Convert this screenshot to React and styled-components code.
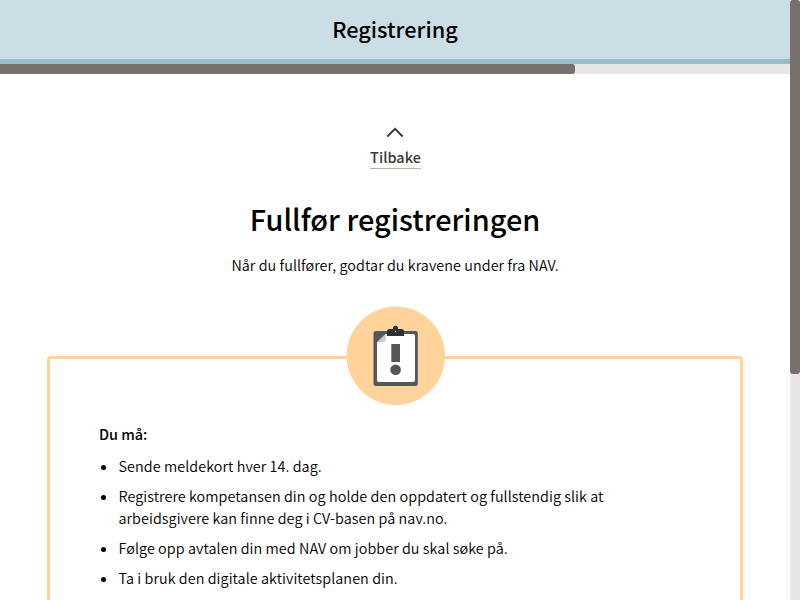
import React from 'react';
import styled, { createGlobalStyle } from 'styled-components';

const GlobalStyle = createGlobalStyle`
  * { box-sizing: border-box; }
  html, body { margin: 0; height: 100%; overflow: hidden; background: #fff; }
  body { font-family: "Noto Sans CJK SC", "Noto Sans", sans-serif; color: #000; font-size: 14.4px; font-weight: 350; }
`;

const Window = styled.div`
  display: flex;
  width: 800px;
  height: 600px;
  overflow: hidden;
`;

const Page = styled.div`
  flex: 0 0 790px;
  display: flex;
  flex-direction: column;
  align-items: stretch;
  overflow: hidden;
`;

const Scrollbar = styled.div`
  flex: 0 0 10px;
  background: #e7e5e5;
`;

const Thumb = styled.div`
  height: 374px;
  border-radius: 3px;
  background: #78706a;
`;

const Header = styled.header`
  flex: 0 0 64px;
  display: flex;
  justify-content: center;
  background: #ccdee5;
  border-bottom: 5px solid #9bbbcb;
`;

const HeaderTitle = styled.div`
  font-size: 21.7px;
  font-weight: 500;
  line-height: 30px;
  padding-top: 14px;
  white-space: nowrap;
`;

const ProgressTrack = styled.div`
  flex: 0 0 10px;
  background: #e7e5e5;
`;

const ProgressBar = styled.div`
  width: 575px;
  height: 10px;
  border-radius: 0 3px 3px 0;
  background: #78706a;
`;

const Main = styled.main`
  flex: none;
  display: flex;
  flex-direction: column;
  align-items: center;
  padding-top: 53px;
`;

const BackLink = styled.a`
  display: flex;
  flex-direction: column;
  align-items: center;
  color: #3e3832;
`;

const BackLabel = styled.span`
  height: 23px;
  margin: 8px 0 0 1px;
  line-height: 22px;
  font-size: 14.5px;
  font-weight: 500;
  border-bottom: 1px solid #b7b1a9;
`;

const Title = styled.h1`
  margin: 29px 0 0;
  font-size: 28.9px;
  font-weight: 500;
  line-height: 40px;
  white-space: nowrap;
`;

const Intro = styled.p`
  margin: 16px 0 0;
  line-height: 22px;
  letter-spacing: 0.063px;
  white-space: nowrap;
`;

const Panel = styled.section`
  width: 696px;
  height: 420px;
  margin-top: 80px;
  border: 3px solid #ffd399;
  border-radius: 4px;
  display: flex;
  flex-direction: column;
  padding: 0 49px;
`;

const Badge = styled.svg`
  flex: none;
  align-self: center;
  width: 100px;
  height: 100px;
  margin-top: -53px;
  transform: translateX(1px);
`;

const ListHeading = styled.p`
  margin: 17px 0 0;
  font-weight: 500;
  line-height: 22px;
`;

const List = styled.ul`
  margin: 10px 0 0;
  padding: 0;
  list-style: none;
  display: flex;
  flex-direction: column;
  gap: 8px;
`;

const Item = styled.li`
  display: flex;
  line-height: 22px;
  letter-spacing: 0.063px;
`;

const Bullet = styled.span`
  flex: none;
  width: 5.5px;
  height: 5.5px;
  margin: 9.5px 12.5px 0 1.5px;
  border-radius: 50%;
  background: #000;
`;

const Line = styled.span`
  display: block;
  width: max-content;
  white-space: nowrap;
`;

const requirements = [
  ['Sende meldekort hver 14. dag.'],
  ['Registrere kompetansen din og holde den oppdatert og fullstendig slik at', 'arbeidsgivere kan finne deg i CV-basen på nav.no.'],
  ['Følge opp avtalen din med NAV om jobber du skal søke på.'],
  ['Ta i bruk den digitale aktivitetsplanen din.'],
];

function ClipboardBadge() {
  return (
    <Badge viewBox="346 306 100 100">
      <circle cx="395.8" cy="355.7" r="49.2" fill="#ffd399" />
      <rect x="373.5" y="331" width="44.3" height="55" rx="2.5" fill="#52585c" />
      <path d="M385.7 334H413a2 2 0 0 1 2 2V380a2 2 0 0 1-2 2H379a2 2 0 0 1-2-2V342.5z" fill="#fff" />
      <path d="M385.7 334V340a2 2 0 0 1-2 2H377z" fill="#c9c9c9" />
      <path d="M387 336V331.5a2.5 2.5 0 0 1 2.5-2.5H393a2.6 2.6 0 1 1 5 0H401.5a2.5 2.5 0 0 1 2.5 2.5V336z" fill="#2c3136" />
      <circle cx="395.5" cy="331.5" r="0.7" fill="#ffd399" />
      <rect x="391.3" y="344" width="8.7" height="18" fill="#52585c" />
      <circle cx="395.6" cy="369.7" r="5.3" fill="#52585c" />
    </Badge>
  );
}

export default function App() {
  return (
    <Window>
      <GlobalStyle />
      <Page>
        <Header><HeaderTitle>Registrering</HeaderTitle></Header>
        <ProgressTrack><ProgressBar /></ProgressTrack>
        <Main>
          <BackLink>
            <svg width="18" height="11" viewBox="0 0 18 11" fill="none" stroke="#3e3832" strokeWidth="2">
              <path d="M1.3 9.5 9 1.9l7.7 7.6" />
            </svg>
            <BackLabel>Tilbake</BackLabel>
          </BackLink>
          <Title>Fullfør registreringen</Title>
          <Intro>Når du fullfører, godtar du kravene under fra NAV.</Intro>
          <Panel>
            <ClipboardBadge />
            <ListHeading>Du må:</ListHeading>
            <List>
              {requirements.map((lines) => (
                <Item key={lines[0]}>
                  <Bullet />
                  <div>{lines.map((line) => <Line key={line}>{line}</Line>)}</div>
                </Item>
              ))}
            </List>
          </Panel>
        </Main>
      </Page>
      <Scrollbar><Thumb /></Scrollbar>
    </Window>
  );
}
